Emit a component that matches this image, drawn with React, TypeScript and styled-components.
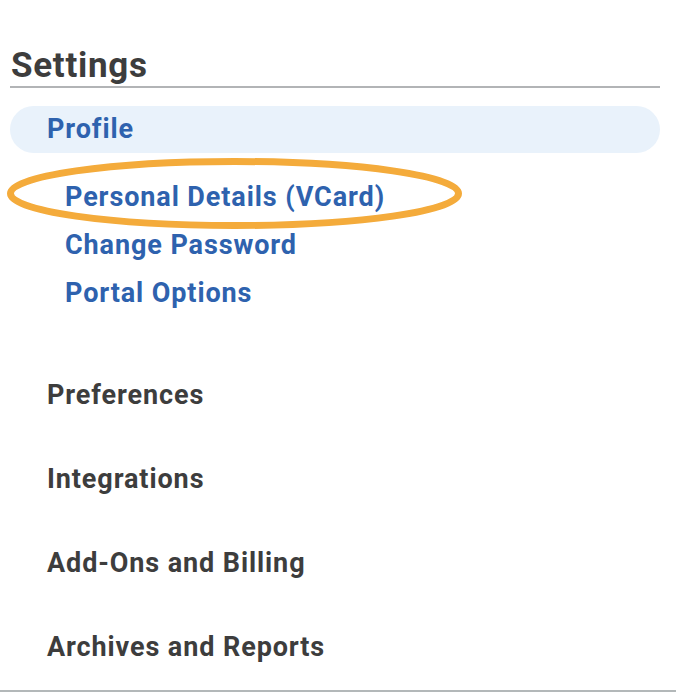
import styled, { createGlobalStyle } from "styled-components";

const GlobalStyle = createGlobalStyle`
  html, body {
    margin: 0;
    padding: 0;
    background: #ffffff;
    font-family: Roboto, "Liberation Sans", sans-serif;
  }
`;

const subItems = ["Personal Details (VCard)", "Change Password", "Portal Options"];
const sections = ["Preferences", "Integrations", "Add-Ons and Billing", "Archives and Reports"];

export default function App() {
  return (
    <>
      <GlobalStyle />
      <Page>
        <Panel>
          <Title>Settings</Title>
          <ActiveItem>Profile</ActiveItem>
          <SubList>
            {subItems.map((label, i) => (
              <SubItem key={label}>
                {label}
                {i === 0 && (
                  <Highlight width="455" height="71" viewBox="0 0 455 71">
                    <ellipse
                      cx="227.5"
                      cy="35.5"
                      rx="224"
                      ry="32"
                      fill="none"
                      stroke="#f4ab3b"
                      strokeWidth="7"
                    />
                  </Highlight>
                )}
              </SubItem>
            ))}
          </SubList>
          <SectionList>
            {sections.map((label) => (
              <SectionItem key={label}>{label}</SectionItem>
            ))}
          </SectionList>
        </Panel>
      </Page>
    </>
  );
}

const Page = styled.div`
  width: 676px;
  height: 692px;
  border-bottom: 2px solid #b3b8b9;
  box-sizing: border-box;
  overflow: hidden;
`;

const Panel = styled.div`
  padding: 48px 16px 0 10px;
`;

const Title = styled.h1`
  margin: 0;
  padding: 1px 0 3px 1px;
  font-size: 35px;
  line-height: 34px;
  font-weight: 700;
  letter-spacing: 0.7px;
  color: #3d3d3d;
  border-bottom: 2px solid #b2b4b6;
`;

const ActiveItem = styled.div`
  margin-top: 18px;
  height: 47px;
  padding-left: 37px;
  display: flex;
  align-items: center;
  border-radius: 24px;
  background: #e9f2fb;
  color: #2e62ae;
  font-size: 27px;
  font-weight: 700;
  line-height: 27px;
  letter-spacing: 0.9px;
`;

const SubList = styled.div`
  margin-top: 20px;
  padding-left: 55px;
  display: flex;
  flex-direction: column;
`;

const SubItem = styled.div`
  position: relative;
  height: 48px;
  line-height: 48px;
  font-size: 27px;
  font-weight: 700;
  letter-spacing: 0.9px;
  color: #2e62ae;
`;

const Highlight = styled.svg`
  position: absolute;
  left: -58px;
  top: -15px;
  pointer-events: none;
`;

const SectionList = styled.div`
  margin-top: 36px;
  padding-left: 37px;
  display: flex;
  flex-direction: column;
`;

const SectionItem = styled.div`
  height: 84px;
  line-height: 84px;
  font-size: 27px;
  font-weight: 700;
  letter-spacing: 0.9px;
  color: #3d3d3d;
`;
